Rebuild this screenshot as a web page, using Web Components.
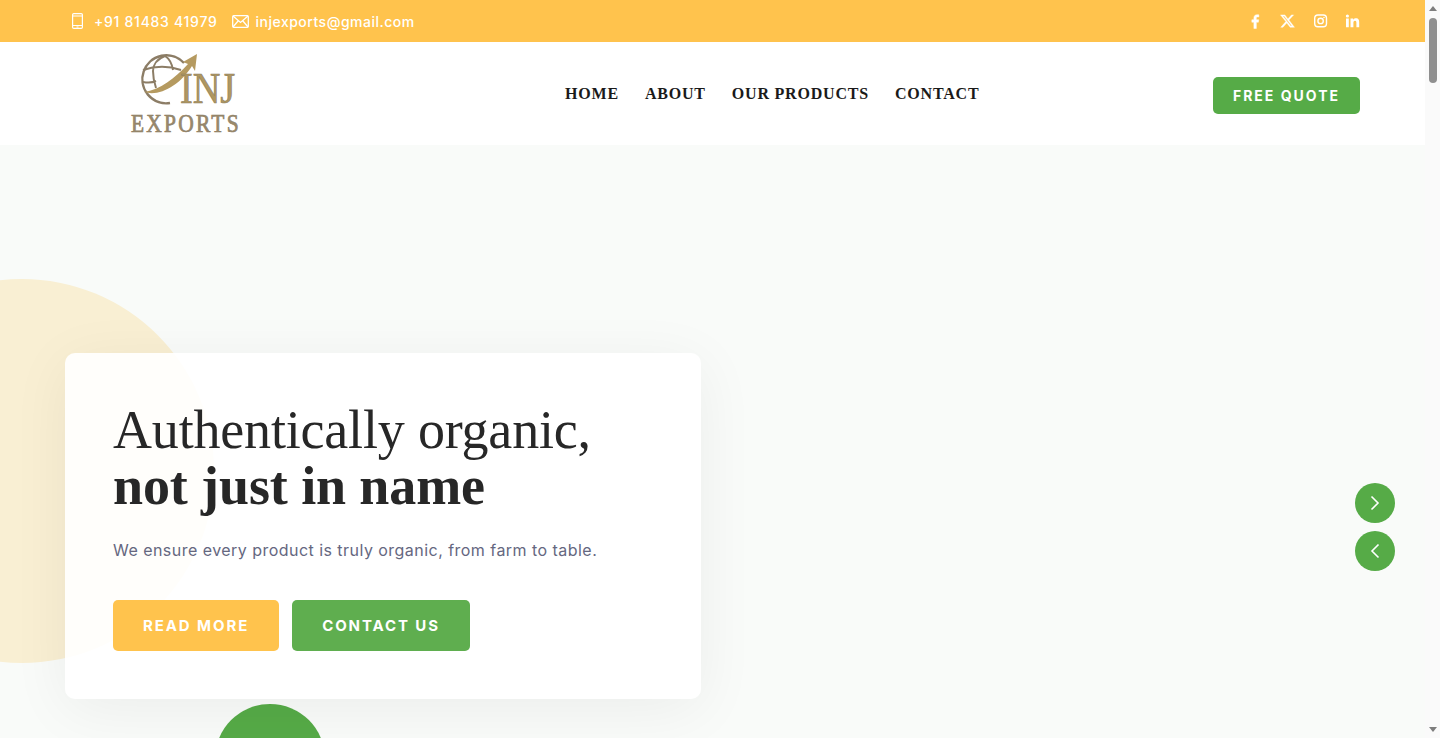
<!DOCTYPE html>
<html>
<head>
<meta charset="utf-8">
<title>INJ Exports</title>
<style>
  html, body { margin: 0; height: 100%; overflow: hidden; }
  body { font-family: Inter, "Liberation Sans", sans-serif; }
</style>
</head>
<body>
<site-page>
  <top-bar></top-bar>
  <main-nav></main-nav>
  <hero-slide>
    <span slot="light">Authentically organic,</span>
    <span slot="bold">not just in name</span>
    <span slot="text">We ensure every product is truly organic, from farm to table.</span>
  </hero-slide>
</site-page>
<script>
function define(name, html) {
  customElements.define(name, class extends HTMLElement {
    constructor() {
      super();
      const template = document.createElement("template");
      template.innerHTML = html;
      this.attachShadow({ mode: "open" }).appendChild(template.content.cloneNode(true));
    }
  });
}

define("site-page", `
  <style>
    :host { display: flex; height: 738px; overflow: hidden; background: #fff; }
    .content { flex: 1; min-width: 0; display: flex; flex-direction: column; }
    .bar { width: 15px; flex: none; background: #fafafa; display: flex; flex-direction: column; align-items: center; position: relative; }
    .thumb { width: 8px; height: 65px; margin-top: 18px; border-radius: 4px; background: #8f8f8f; }
    .up, .down { position: absolute; width: 0; height: 0; border-left: 4px solid transparent; border-right: 4px solid transparent; }
    .up { top: 6px; border-bottom: 5px solid #7d7d7d; }
    .down { bottom: 6px; border-top: 5px solid #7d7d7d; }
  </style>
  <div class="content"><slot></slot></div>
  <div class="bar"><i class="up"></i><div class="thumb"></div><i class="down"></i></div>
`);

define("top-bar", `
  <style>
    :host { display: flex; height: 42px; flex: none; background: #ffc34d; color: #fff; align-items: center; justify-content: space-between; padding: 0 65px 0 72px; font: 500 14px Inter, sans-serif; }
    .left, .item, .social { display: flex; align-items: center; }
    .item svg { display: block; }
    .phone { gap: 11px; margin-right: 14px; letter-spacing: .72px; }
    .mail { gap: 7px; letter-spacing: .5px; }
    .social { gap: 16px; }
    .social svg { display: block; width: 16px; height: 16px; fill: #fff; }
  </style>
  <div class="left">
    <div class="item phone">
      <svg width="11" height="16" viewBox="0 0 11 16" fill="none" stroke="#fff" stroke-width="1.200"><rect x=".6" y=".6" width="9.800" height="14.800" rx="1.200"/><path d="M.5 3h10M.5 12.500h10M4.500 14h2"/></svg>
      <span>+91 81483 41979</span>
    </div>
    <div class="item mail">
      <svg width="17" height="13" viewBox="0 0 17 13" fill="none" stroke="#fff" stroke-width="1.300"><rect x=".7" y=".7" width="15.600" height="11.600" rx="1"/><path d="M1 1l7.500 6.500L16 1M1 12l5.500-6.500M16 12l-5.500-6.500"/></svg>
      <span>injexports@gmail.com</span>
    </div>
  </div>
  <div class="social">
    <svg viewBox="0 -1.500 18 18" stroke="#fff" stroke-width=".5"><path d="M9.400 16V8.900h2.300l.4-2.800H9.400V4.400c0-.8.300-1.400 1.400-1.400h1.400V.5C11.900.5 11.100.4 10.200.4 8.100.4 6.600 1.700 6.600 4.100v2H4.300v2.800h2.300V16z"/></svg>
    <svg viewBox="0 0 17 16" stroke="#fff" stroke-width=".4"><path d="M12.200 1.500h2.300L9.500 7l5.900 7.700h-4.600L7.200 10l-4.100 4.700H.8l5.400-6.100L.5 1.500h4.700l3.200 4.300zm-.8 11.900h1.300L4.400 2.800H3z"/></svg>
    <svg viewBox="0 0 16 16" style="fill:none" stroke="#fff" stroke-width="1.400"><rect x="2.700" y="2" width="11.800" height="11.800" rx="3.200"/><circle cx="8.600" cy="7.900" r="2.700"/><circle cx="12" cy="4.400" r=".5" fill="#fff" stroke-width=".5"/></svg>
    <svg viewBox="0 0 16 16"><path d="M2 5.500h2.800v8.700H2zM3.400 1.400a1.600 1.600 0 1 1 0 3.200 1.600 1.600 0 0 1 0-3.200zM6.500 5.500h2.700v1.200c.4-.7 1.300-1.400 2.700-1.400 2.800 0 3.300 1.800 3.300 4.200v4.700h-2.800V10c0-1 0-2.300-1.400-2.300s-1.600 1.100-1.600 2.200v4.300H6.500z"/></svg>
  </div>
`);

define("main-nav", `
  <style>
    :host { display: flex; height: 103px; flex: none; align-items: center; background: #fff; padding: 0 65px 0 130px; }
    .logo { width: 120px; height: 103px; flex: none; display: block; }
    nav { display: flex; gap: 26px; margin-left: 315px; font: bold 16px "Liberation Serif", serif; letter-spacing: .8px; color: #1a1a1a; }
    .quote { margin-left: auto; height: 37px; padding: 0 20px; margin-top: 3px; display: flex; align-items: center; background: #56ab47; border-radius: 5px; color: #fff; font: 700 14px Inter, sans-serif; letter-spacing: 2px; }
  </style>
  <svg class="logo" viewBox="130 42 120 103">
    <g fill="none" stroke="#8c7d66">
      <path stroke-width="2.400" d="M184 63A24 24 0 1 0 170 103"/>
      <path stroke-width="2" d="M165 56c-8 3-12 9-12 15 0 6 1 11 3 17M165 56c5 3 7 8 8 14M143 70c12-4 26-4 38 0M143 82c5 1 9 1 13-1"/>
    </g>
    <path d="M144 92c16-2 31-14 44-28l-5-2 14-8-2 17-3-5c-12 19-32 31-48 26z" fill="#b59a60"/>
    <text transform="translate(180 103) scale(.85 1)" font-family="Liberation Serif" font-size="45" fill="#b0975f" stroke="#8f7f5f" stroke-width=".7">INJ</text>
    <text transform="translate(131 132) scale(.86 1)" font-family="Liberation Serif" font-size="25" letter-spacing="2.600" fill="#9a8a6c" stroke="#8f8066" stroke-width=".7">EXPORTS</text>
  </svg>
  <nav><span>HOME</span><span>ABOUT</span><span>OUR PRODUCTS</span><span>CONTACT</span></nav>
  <div class="quote">FREE QUOTE</div>
`);

define("hero-slide", `
  <style>
    :host { display: block; flex: 1; position: relative; overflow: hidden; background: #f9fbf9; padding: 208px 0 0 65px; }
    .sun { position: absolute; left: -170px; top: 134px; width: 384px; height: 384px; border-radius: 50%; background: #f9efd3; }
    .dot { position: absolute; left: 215px; top: 559px; width: 110px; height: 110px; border-radius: 50%; background: #56ab47; }
    .card { position: relative; box-sizing: border-box; width: 636px; height: 346px; padding: 49px 48px 48px; border-radius: 10px; background: rgba(255,255,255,.9); box-shadow: 0 10px 60px rgba(0,0,0,.06); }
    h1 { margin: 0; font: 400 54px/57px "Liberation Serif", serif; letter-spacing: -.18px; color: #272727; }
    h1 b { display: block; margin-top: -1px; font-weight: 700; letter-spacing: -.1px; }
    p { margin: 22px 0 0; font: 400 16px/26px Inter, sans-serif; letter-spacing: .46px; color: #65677f; }
    .actions { display: flex; gap: 13px; margin-top: 37px; }
    .btn { height: 51px; padding: 0 30px; display: flex; align-items: center; border-radius: 5px; color: #fff; font: 700 15px Inter, sans-serif; letter-spacing: 1.9px; }
    .read { background: #ffc34d; }
    .contact { background: #5fae4f; }
    .arrows { position: absolute; right: 30px; top: 338px; display: flex; flex-direction: column; gap: 8px; }
    .arrows span { width: 40px; height: 40px; border-radius: 50%; background: #56ab47; display: flex; align-items: center; justify-content: center; }
  </style>
  <div class="sun"></div>
  <div class="dot"></div>
  <div class="card">
    <h1><slot name="light"></slot><b><slot name="bold"></slot></b></h1>
    <p><slot name="text"></slot></p>
    <div class="actions">
      <div class="btn read">READ MORE</div>
      <div class="btn contact">CONTACT US</div>
    </div>
  </div>
  <div class="arrows">
    <span><svg width="10" height="16" viewBox="0 0 10 16" fill="none" stroke="#fff" stroke-width="1.600"><path d="M1.500 1.500L8 8l-6.500 6.500"/></svg></span>
    <span><svg width="10" height="16" viewBox="0 0 10 16" fill="none" stroke="#fff" stroke-width="1.600"><path d="M8.500 1.500L2 8l6.500 6.500"/></svg></span>
  </div>
`);
</script>
</body>
</html>
